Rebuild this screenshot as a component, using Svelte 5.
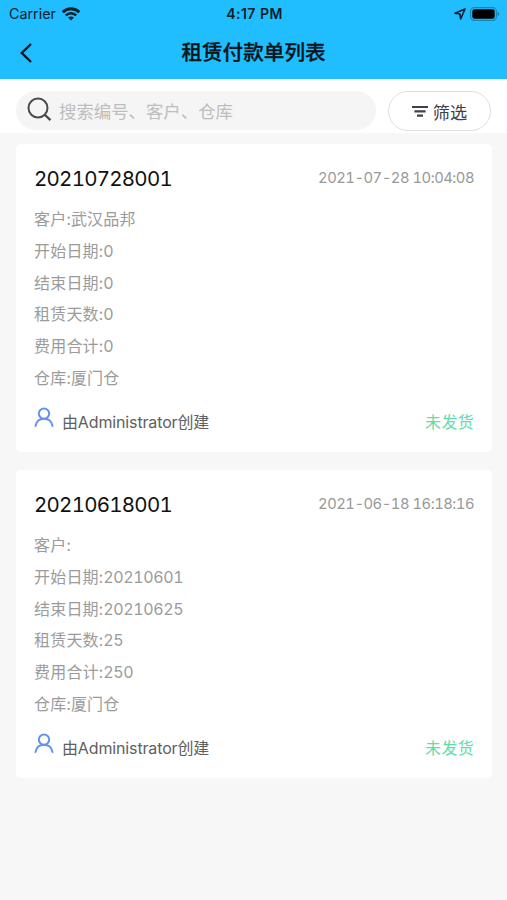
<script>
  let keyword = '';

  const orders = [
    {
      code: '20210728001',
      createdAt: '2021-07-28 10:04:08',
      customer: '武汉品邦',
      startDate: '0',
      endDate: '0',
      days: '0',
      total: '0',
      warehouse: '厦门仓',
      creator: 'Administrator',
      status: '未发货'
    },
    {
      code: '20210618001',
      createdAt: '2021-06-18 16:18:16',
      customer: '',
      startDate: '20210601',
      endDate: '20210625',
      days: '25',
      total: '250',
      warehouse: '厦门仓',
      creator: 'Administrator',
      status: '未发货'
    }
  ];

  const fields = [
    { key: 'customer', label: '客户' },
    { key: 'startDate', label: '开始日期', numeric: true },
    { key: 'endDate', label: '结束日期', numeric: true },
    { key: 'days', label: '租赁天数', numeric: true },
    { key: 'total', label: '费用合计', numeric: true },
    { key: 'warehouse', label: '仓库' }
  ];
</script>

<div class="page">
  <header>
    <div class="status-bar">
      <div class="carrier">
        <span>Carrier</span>
        <svg width="18" height="14" viewBox="0 0 18 14" fill="none" stroke="#06202c">
          <path d="M.8 5.2C5.2 .6 12.8 .6 17.2 5.2" stroke-width="2.8" />
          <path d="M3.8 8.3C6.7 5.4 11.3 5.4 14.2 8.3" stroke-width="2.5" />
          <path d="M6 10.6C7.7 9.1 10.3 9.1 12 10.6L9 13.6z" fill="#06202c" stroke="none" />
        </svg>
      </div>
      <span class="clock">4:17 PM</span>
      <div class="indicators">
        <svg width="12" height="12" viewBox="0 0 12 12" fill="none" stroke="#06202c" stroke-width="1.6" stroke-linejoin="round">
          <path d="M11 1L1 5.3 5.9 6 6.7 11z" />
        </svg>
        <svg width="30" height="14" viewBox="0 0 30 14">
          <rect x=".6" y=".6" width="25.8" height="12.8" rx="3.8" fill="none" stroke="#1286b5" stroke-width="1.1" />
          <rect x="2.3" y="2.3" width="22.4" height="9.4" rx="2.2" fill="#000" />
          <path d="M27.6 4.8a2.3 2.3 0 0 1 0 4.4z" fill="#1286b5" />
        </svg>
      </div>
    </div>
    <div class="nav">
      <button class="back" aria-label="返回">
        <svg width="14" height="20" viewBox="0 0 14 20" fill="none" stroke="#06141b" stroke-width="2.4">
          <path d="M12 1L2.8 10 12 19" />
        </svg>
      </button>
      <h1>租赁付款单列表</h1>
    </div>
  </header>

  <div class="toolbar">
    <label class="search">
      <svg width="25" height="25" viewBox="0 0 25 25" fill="none" stroke="#4b4b4b" stroke-width="2">
        <circle cx="11" cy="11" r="9.5" />
        <path d="M17.6 17.6L23.5 23.2" stroke-width="2.3" />
      </svg>
      <input type="text" placeholder="搜索编号、客户、仓库" bind:value={keyword} />
    </label>
    <button class="filter">
      <svg width="16" height="12" viewBox="0 0 16 12" fill="none" stroke="#3e4248" stroke-width="2.2">
        <path d="M0 2h16M2.4 6.4h11.2M5 10.7h6" />
      </svg>
      筛选
    </button>
  </div>

  <main>
    {#each orders as order (order.code)}
      <article class="card">
        <div class="card-head">
          <h2>{order.code}</h2>
          <time>{order.createdAt}</time>
        </div>
        <div class="fields">
          {#each fields as field (field.key)}
            <p>{field.label}:<span class:numeric={field.numeric}>{order[field.key]}</span></p>
          {/each}
        </div>
        <div class="card-foot">
          <svg width="20" height="21" viewBox="0 0 20 21" fill="none" stroke="#6293ee" stroke-width="2" stroke-linecap="round">
            <circle cx="10" cy="6.6" r="5.2" />
            <path d="M1.5 19C2.4 14.4 5.8 11.8 10 11.8s7.6 2.6 8.5 7.2" />
          </svg>
          <span class="creator">由{order.creator}创建</span>
          <span class="state">{order.status}</span>
        </div>
      </article>
    {/each}
  </main>
</div>

<style>
  :global(body) {
    background: #f7f7f7;
  }

  .page {
    min-height: 900px;
    background: #f7f7f7;
    font-family: Inter, 'Noto Sans CJK SC', sans-serif;
    color: #111;
  }

  header {
    height: 79px;
    background: #21beff;
  }

  .status-bar {
    display: grid;
    grid-template-columns: 1fr auto 1fr;
    align-items: center;
    height: 27px;
    padding: 0 7px 0 9px;
    color: #06202c;
    font-size: 14.3px;
  }

  .carrier, .indicators {
    display: flex;
    align-items: center;
    gap: 6px;
  }

  .indicators {
    justify-content: flex-end;
    gap: 4px;
  }

  .clock {
    font-size: 14px;
    font-weight: 600;
    letter-spacing: 0.5px;
  }

  .nav {
    display: grid;
    grid-template-columns: 60px 1fr 60px;
    align-items: center;
    height: 51px;
  }

  button {
    border: 0;
    background: none;
    font-family: inherit;
    cursor: pointer;
  }

  .back {
    display: flex;
    padding: 0 0 0 19px;
  }

  h1 {
    margin: 0;
    padding-top: 1px;
    font-size: 20.6px;
    font-weight: 500;
    line-height: 30px;
    text-align: center;
    color: #06141b;
    -webkit-text-stroke: 0.3px #06141b;
  }

  .toolbar {
    display: flex;
    gap: 12px;
    height: 54px;
    padding: 12px 16px 0;
    box-sizing: border-box;
    background: #fff;
  }

  .search {
    flex: 1;
    display: flex;
    align-items: center;
    gap: 7px;
    height: 39px;
    padding: 0 11px;
    box-sizing: border-box;
    border-radius: 20px;
    background: #f5f5f5;
  }

  .search svg {
    margin-top: -3px;
    flex: none;
  }

  input {
    flex: 1;
    min-width: 0;
    padding: 1px 0 0;
    border: 0;
    outline: 0;
    background: none;
    font-family: inherit;
    font-size: 17.4px;
  }

  input::placeholder {
    color: #bdbdbd;
    opacity: 1;
  }

  .filter {
    display: flex;
    align-items: center;
    justify-content: center;
    gap: 5px;
    width: 103px;
    height: 40px;
    padding: 0;
    border: 1.5px solid #dedfe2;
    border-radius: 20px;
    background: #fff;
    color: #3e4248;
    font-size: 17.2px;
  }

  main {
    display: flex;
    flex-direction: column;
    gap: 18px;
    padding: 11px 15px 20px 16px;
  }

  .card {
    height: 308px;
    padding: 18px 18px 0;
    box-sizing: border-box;
    border-radius: 5px;
    background: #fff;
    font-variant-numeric: tabular-nums;
  }

  .card-head {
    display: flex;
    align-items: center;
    justify-content: space-between;
    height: 32px;
  }

  h2 {
    margin: 0;
    font-size: 20.5px;
    font-weight: 400;
    letter-spacing: -0.75px;
    color: #111;
  }

  time {
    font-size: 14.8px;
    color: #999;
    letter-spacing: -0.5px;
  }

  .fields {
    margin-top: 10px;
  }

  p {
    margin: 0;
    font-size: 16px;
    line-height: 31.8px;
    letter-spacing: 0.2px;
    color: #9b9b9b;
  }

  .numeric {
    letter-spacing: -0.4px;
  }

  .card-foot {
    display: flex;
    align-items: center;
    height: 40px;
    margin-top: 6px;
    font-size: 16px;
  }

  .card-foot svg {
    margin: -7px 8px 0 0;
  }

  .creator {
    flex: 1;
    letter-spacing: -0.14px;
    color: #606060;
  }

  .state {
    color: #5fdcab;
    letter-spacing: 0.3px;
  }
</style>
